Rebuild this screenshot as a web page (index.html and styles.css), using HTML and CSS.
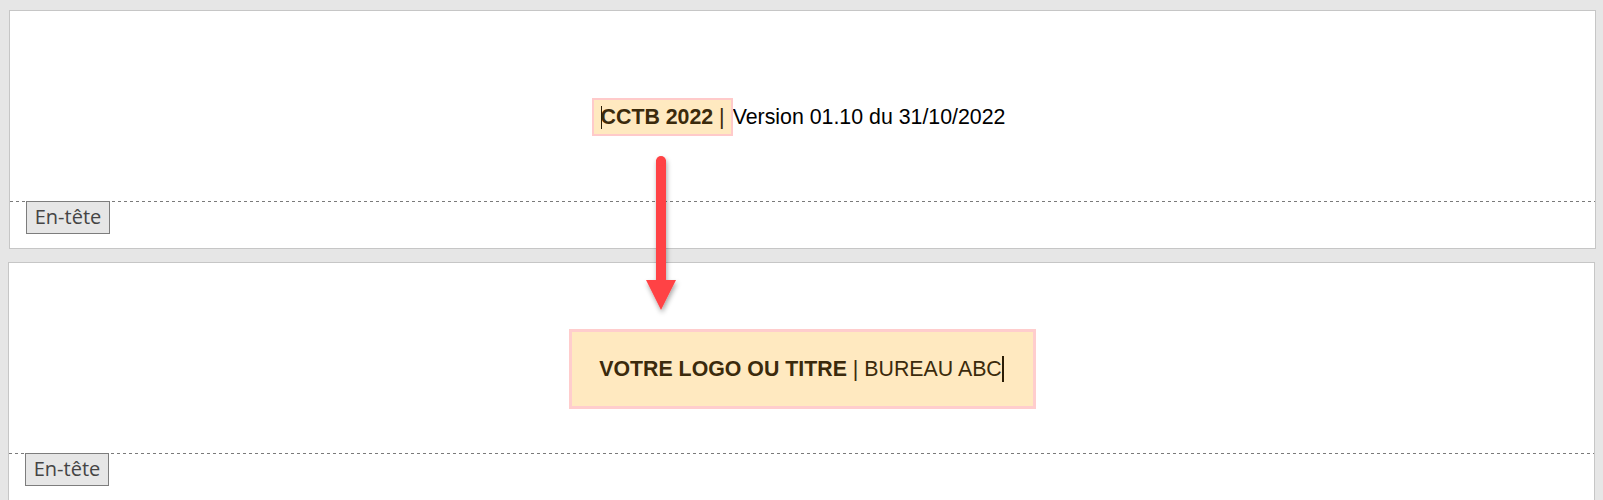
FILE: index.html
```html
<!DOCTYPE html>
<html lang="fr">
<head>
<meta charset="utf-8">
<link rel="stylesheet" href="styles.css">
</head>
<body>
<div class="doc">
  <section class="page page-one">
    <div class="header-area">
      <p class="line line-top">
        <span class="hl hl-small"><span class="caret caret-thin"></span><b>CCTB 2022</b> |</span>Version 01.10 du 31/10/2022
      </p>
    </div>
    <div class="sep">
      <span class="tag">En-tête</span>
    </div>
  </section>
  <section class="page page-two">
    <div class="header-area">
      <p class="line">
        <span class="hl hl-big"><b>VOTRE LOGO OU TITRE</b> | BUREAU ABC<span class="caret caret-thick"></span></span>
      </p>
    </div>
    <div class="sep">
      <span class="tag">En-tête</span>
    </div>
  </section>
  <svg class="arrow" width="50" height="175" viewBox="0 0 50 175" aria-hidden="true">
    <defs>
      <filter id="sh" x="-50%" y="-20%" width="200%" height="140%">
        <feDropShadow dx="1" dy="3" stdDeviation="2.5" flood-color="#000" flood-opacity="0.35"/>
      </filter>
    </defs>
    <g filter="url(#sh)">
      <rect x="20" y="10" width="10" height="122" fill="#ff4244"/>
      <rect x="20" y="6" width="10" height="10" rx="5" fill="#ff4244"/>
      <polygon points="10,130 40,130 25,160" fill="#ff4244"/>
    </g>
  </svg>
</div>
</body>
</html>
```
FILE: styles.css
```css
html, body {
  margin: 0;
  padding: 0;
  background: #e6e6e6;
  overflow: hidden;
}
.doc {
  position: relative;
  width: 1603px;
  height: 500px;
  padding-top: 10px;
  box-sizing: border-box;
}
.page {
  background: #fff;
  border: 1px solid #c6c6c6;
  width: 1587px;
  box-sizing: border-box;
}
.page-one {
  margin-left: 9px;
  height: 239px;
}
.page-two {
  margin-left: 8px;
  margin-top: 13px;
  height: 260px;
}
.header-area {
  height: 190px;
  padding-top: 21px;
  box-sizing: border-box;
  display: flex;
  align-items: center;
  justify-content: center;
}
.line {
  margin: 0;
  font-family: "Liberation Sans", Arial, sans-serif;
  font-size: 21.33px;
  line-height: 24px;
  color: #000;
  display: flex;
  align-items: center;
  padding-left: 2px;
}
.line-top {
  padding-left: 0;
  padding-right: 8px;
}
.hl {
  background: #ffe9c0;
  color: #3b2a0c;
  display: inline-flex;
  align-items: center;
  box-sizing: border-box;
  white-space: pre;
}
.hl b { font-weight: 700; }
.hl-small {
  border: 2px solid #ffcaca;
  height: 38px;
  padding: 0 6px 0 7px;
  position: relative;
}
.hl-big {
  border: 3px solid #ffcdcd;
  height: 80px;
  width: 467px;
  justify-content: center;
  padding-right: 2px;
}
.caret {
  display: inline-block;
  background: #2b1d06;
}
.caret-thin {
  width: 1px;
  height: 23px;
  position: absolute;
  left: 7px;
  top: 6px;
}
.caret-thick {
  width: 2px;
  height: 26px;
}
.sep {
  height: 1px;
  background-image: repeating-linear-gradient(to right, #7a7a7a 0 3px, transparent 3px 6px);
  padding-left: 16px;
}
.tag {
  display: inline-block;
  width: 84px;
  height: 33px;
  box-sizing: border-box;
  border: 1px solid #7d7d7d;
  background: #e6e6e6;
  color: #444;
  font-family: "Open Sans", "Noto Sans", sans-serif;
  font-size: 20px;
  line-height: 30px;
  text-align: center;
}
.arrow {
  position: absolute;
  left: 636px;
  top: 150px;
}
```
